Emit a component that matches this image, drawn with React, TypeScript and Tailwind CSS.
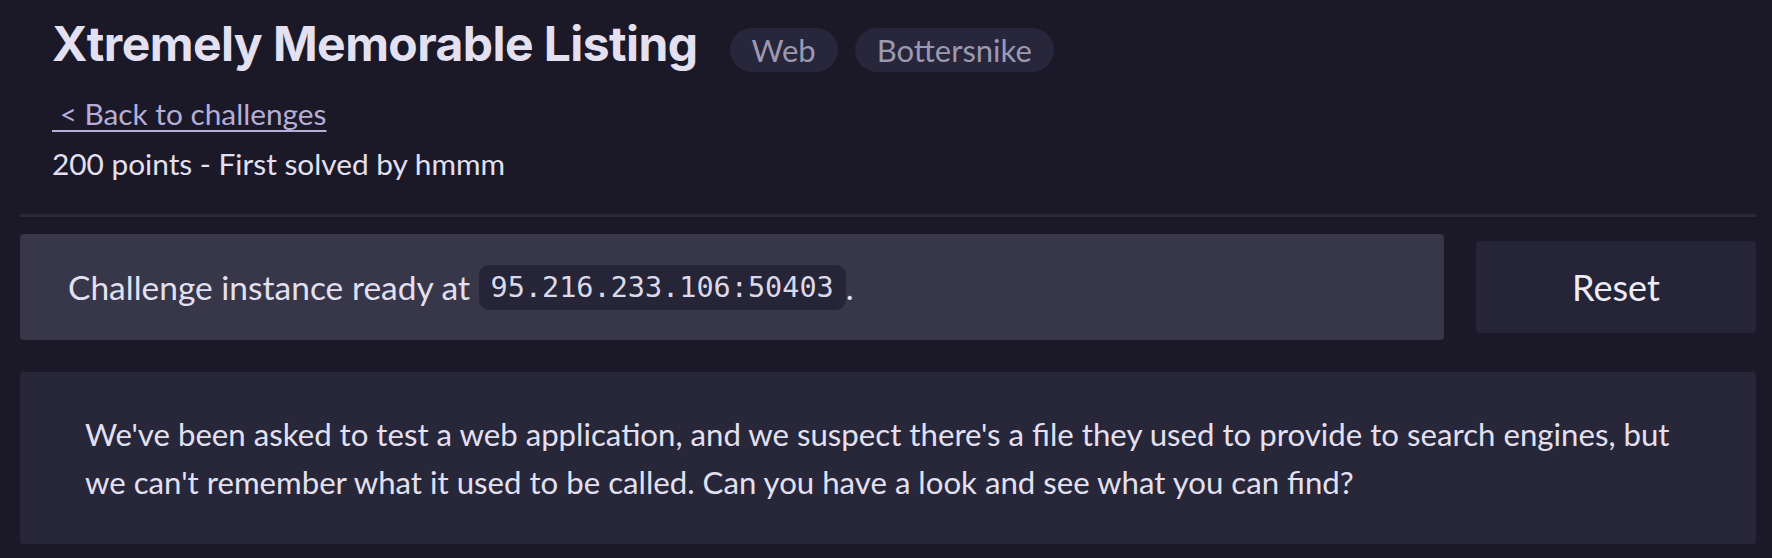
export default function App() {
  return (
    <div className="min-h-screen bg-[#1b1928] pl-[20px] pr-[16px] pt-[20px] text-[#e3e0f1] [font-family:Lato,'Liberation_Sans',sans-serif]">
      <div className="pl-[32px]">
        <div className="flex items-start">
          <h1 className="text-[48px] leading-[48px] font-bold tracking-[-0.012em] text-[#e3e0f1] [font-family:Inter,'Liberation_Sans',sans-serif]">
            Xtremely Memorable Listing
          </h1>
          <div className="ml-[32px] mt-[8px] flex gap-[17px]">
            <span className="flex h-[44px] items-center rounded-full bg-[#27263a] px-[22px] text-[31px] text-[#9b99b1]">Web</span>
            <span className="flex h-[44px] items-center rounded-full bg-[#27263a] px-[22px] text-[31px] text-[#9b99b1]">Bottersnike</span>
          </div>
        </div>
        <div className="mt-[24px] text-[29.8px] leading-[36px]">
          <a href="#" className="text-[#b6aed6] underline underline-offset-[5px] decoration-[2px]">{"\u00a0< Back to challenges"}</a>
        </div>
        <p className="mt-[14px] text-[29.8px] leading-[36px] text-[#e3e0f1]">200 points - First solved by hmmm</p>
      </div>
      <div className="mt-[32px] h-[3px] bg-[#2a283b]" />
      <div className="mt-[17px] flex items-center gap-[32px]">
        <div className="flex h-[106px] flex-1 items-center rounded-[4px] bg-[#383649] pl-[48px] text-[33.5px]">
          <span>Challenge instance ready at&nbsp;</span>
          <code className="rounded-[10px] bg-[#262537] px-[12px] py-[5px] text-[28.5px] leading-[35px] text-[#dcd9ea] [font-family:'DejaVu_Sans_Mono',monospace]">95.216.233.106:50403</code>
          <span>.</span>
        </div>
        <button className="flex h-[92px] w-[280px] items-center justify-center rounded-[4px] bg-[#262538] text-[36px] text-[#eeecf6]">Reset</button>
      </div>
      <div className="mt-[32px] rounded-[4px] bg-[#28273a] px-[65px] py-[38px] text-[31.2px] leading-[48px]">
        We've been asked to test a web application, and we suspect there's a file they used to provide to search engines, but we can't remember what it used to be called. Can you have a look and see what you can find?
      </div>
    </div>
  );
}
